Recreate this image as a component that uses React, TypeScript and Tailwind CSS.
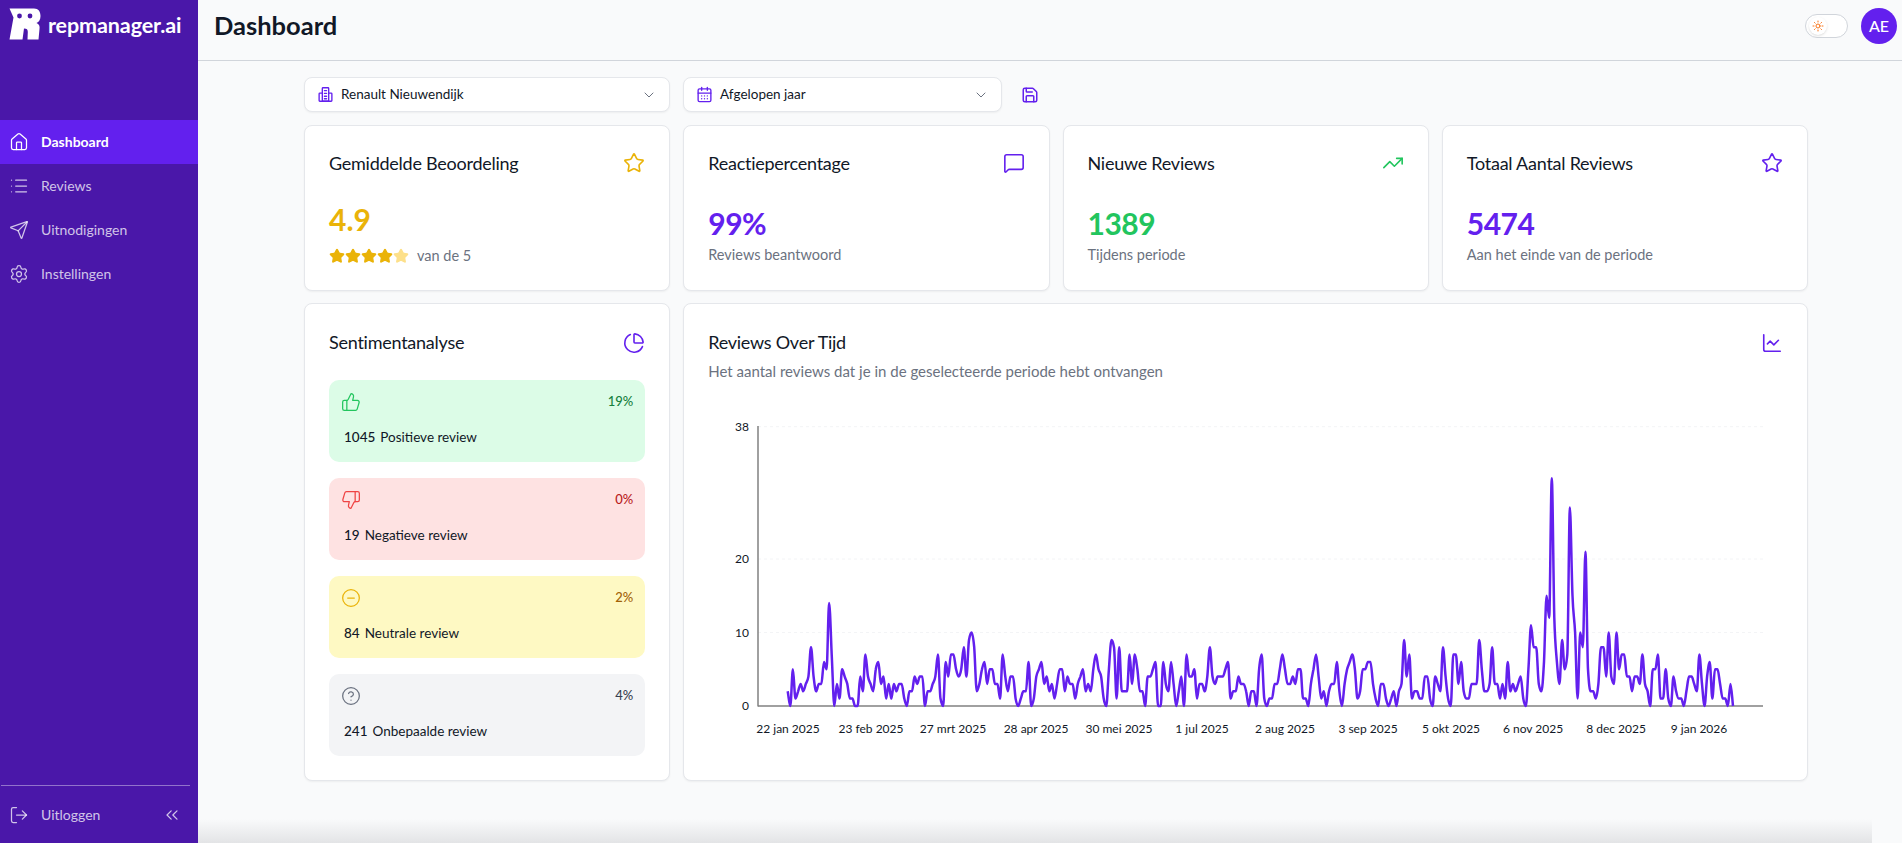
import {
  CalendarDays,
  ChartLine,
  ChartPie,
  ChevronDown,
  ChevronsLeft,
  CircleHelp,
  CircleMinus,
  House,
  List,
  LogOut,
  MessageSquare,
  Save,
  Send,
  Settings,
  Star,
  Sun,
  ThumbsDown,
  ThumbsUp,
  TrendingUp,
} from "lucide-react";

const font = { fontFamily: "Lato, 'Noto Sans', sans-serif" };

// one value per day, 22 jan 2025 to 22 jan 2026
const reviews = [
  2, 0, 5, 1, 2, 3, 2, 3, 4, 8, 4, 2, 3, 3, 6, 5, 14, 7, 0, 3, 1, 5, 4, 3, 1, 1, 0, 0, 4, 2, 7, 4, 3, 2, 5, 6, 3, 4, 1, 3, 1, 3, 2, 3, 3, 1, 0, 2, 2, 4, 3, 4, 4, 0, 2, 2, 3, 4, 7, 1, 0, 6, 4, 7, 7, 5, 4, 5, 8, 4, 9, 10, 8, 2, 3, 5, 6, 3, 5, 5, 3, 3, 1, 7, 4, 2, 4, 4, 1, 0, 1, 2, 2, 6, 0, 1, 4, 5, 6, 3, 4, 2, 3, 1, 3, 5, 5, 2, 4, 3, 3, 1, 3, 4, 5, 2, 3, 2, 5, 7, 5, 4, 1, 0, 5, 9, 8, 1, 8, 2, 2, 2,
  7, 3, 7, 5, 2, 2, 0, 4, 4, 5, 6, 0, 0, 6, 3, 2, 6, 3, 0, 2, 4, 0, 7, 4, 4, 5, 1, 3, 3, 2, 4, 8, 4, 3, 4, 4, 4, 5, 6, 1, 2, 2, 4, 3, 3, 2, 0, 2, 2, 0, 5, 7, 1, 0, 1, 1, 3, 3, 5, 7, 5, 3, 3, 4, 3, 5, 5, 1, 1, 0, 3, 5, 7, 4, 1, 2, 0, 2, 3, 3, 6, 2, 0, 3, 5, 6, 7, 5, 1, 2, 5, 5, 6, 6, 3, 1, 0, 3, 3, 1, 0, 1, 2, 0, 2, 3, 9, 4, 7, 1, 2, 2, 1, 1, 4, 4, 1, 0, 4, 3, 2, 8, 4, 1, 0, 7, 7, 3, 6, 2, 1, 1, 3, 3, 3, 9, 5, 2, 2, 3, 8, 3, 3, 1, 3, 1, 6, 2, 3, 2, 3, 4, 1, 0, 5, 11, 8, 8, 3, 2, 6, 15, 12, 31, 12, 6, 3, 9, 5, 7, 27, 15, 10, 1,
  10, 8, 21, 5, 2, 2, 1, 3, 8, 8, 4, 10, 4, 3, 10, 5, 7, 7, 4, 4, 2, 4, 4, 3, 7, 3, 2, 0, 5, 5, 7, 1, 1, 5, 1, 0, 4, 2, 1, 1, 0, 2, 4, 4, 3, 2, 7, 3, 0, 4, 6, 1, 5, 5, 3, 1, 1, 0, 3, 0,
];

const ticks = [
  { x: 788, label: "22 jan 2025" },
  { x: 871, label: "23 feb 2025" },
  { x: 953, label: "27 mrt 2025" },
  { x: 1036, label: "28 apr 2025" },
  { x: 1119, label: "30 mei 2025" },
  { x: 1202, label: "1 jul 2025" },
  { x: 1285, label: "2 aug 2025" },
  { x: 1368, label: "3 sep 2025" },
  { x: 1451, label: "5 okt 2025" },
  { x: 1533, label: "6 nov 2025" },
  { x: 1616, label: "8 dec 2025" },
  { x: 1699, label: "9 jan 2026" },
];

// chart svg starts at page x 684
const px = (i: number) => 787.7 - 684 + i * 2.59;
const py = (v: number) => 306 - v * 7.35;

// same curve as d3 curveMonotoneX
function monotonePath(values: number[]) {
  const h = 2.59;
  const n = values.length;
  const s: number[] = [];
  for (let i = 0; i < n - 1; i++) s.push((values[i + 1] - values[i]) / h);
  const t: number[] = values.map((_, i) => {
    if (i === 0) return s[0];
    if (i === n - 1) return s[n - 2];
    if (s[i - 1] * s[i] <= 0) return 0;
    const p = (s[i - 1] + s[i]) / 2;
    return Math.min(Math.abs(s[i - 1]), Math.abs(s[i]), Math.abs(p) / 2) * 2 * Math.sign(p);
  });
  let d = `M${px(0).toFixed(1)} ${py(values[0]).toFixed(1)}`;
  for (let i = 0; i < n - 1; i++) {
    const x0 = px(i);
    const x1 = px(i + 1);
    const c1 = py(values[i] + (t[i] * h) / 3);
    const c2 = py(values[i + 1] - (t[i + 1] * h) / 3);
    d += `C${(x0 + h / 3).toFixed(1)} ${c1.toFixed(1)} ${(x1 - h / 3).toFixed(1)} ${c2.toFixed(1)} ${x1.toFixed(1)} ${py(values[i + 1]).toFixed(1)}`;
  }
  return d;
}

const Logo = () => (
  <svg viewBox="0 0 32 32" className="w-8 h-8 shrink-0">
    <path
      d="M0.5 0.5H25C29.5 0.5 31.5 3.5 31.5 8C31.5 11.5 30 14 27.5 15C30 16 31 18 30.5 21L29.5 31.5H18.5L18.8 24C18.8 21.5 18 20.5 15 20.5L13.5 31.5H0.5L4.5 9.5Z"
      fill="white"
    />
    <circle cx="10.5" cy="8" r="2.4" fill="#4a17a9" />
    <circle cx="21" cy="8" r="2.4" fill="#4a17a9" />
  </svg>
);

const BuildingIcon = () => (
  <svg
    viewBox="0 0 24 24"
    fill="none"
    stroke="currentColor"
    strokeWidth="1.9"
    strokeLinejoin="round"
    strokeLinecap="round"
    className="w-[17px] h-[17px] shrink-0 text-[#6320ee]"
  >
    <rect x="7.5" y="2.5" width="9" height="19" rx="1" />
    <path d="M7.5 10H4a1 1 0 0 0-1 1v9.5a1 1 0 0 0 1 1h16a1 1 0 0 0 1-1V11a1 1 0 0 0-1-1h-3.5" />
    <path d="M10.5 6.5h3M10.5 10.5h3M10.5 14.5h3M10.5 18h3" />
  </svg>
);

const StatCard = ({
  title,
  value,
  sub,
  icon,
  color,
}: {
  title: string;
  value: string;
  sub: string;
  icon: React.ReactNode;
  color: string;
}) => (
  <div className="bg-white rounded-lg border border-[#e5e7eb] shadow-xs h-[166px] px-6 pt-[22px]">
    <div className="flex items-center justify-between h-[26px] pt-1">
      <h3 className="text-[18px] text-[#111827] tracking-[-0.25px]">{title}</h3>
      {icon}
    </div>
    <p className={`text-[30px] leading-9 font-bold tracking-[-0.5px] mt-[31px] ${color}`}>{value}</p>
    <p className="text-[14.5px] leading-5 text-[#6b7280] mt-[4px]">{sub}</p>
  </div>
);

const SentimentBox = ({
  bg,
  icon,
  pct,
  pctColor,
  count,
  label,
}: {
  bg: string;
  icon: React.ReactNode;
  pct: string;
  pctColor: string;
  count: string;
  label: string;
}) => (
  <div className={`${bg} rounded-[10px] h-[82px] pl-3 pr-3 pt-3`}>
    <div className="flex items-start justify-between h-[20px]">
      {icon}
      <span className={`text-[13px] leading-[18px] font-medium ${pctColor}`}>{pct}</span>
    </div>
    <p className="text-[13.5px] leading-5 text-[#111827] mt-[15px] pl-[3px]">
      <span className="font-medium">{count}</span>
      <span className="ml-[5px]">{label}</span>
    </p>
  </div>
);

export default function App() {
  return (
    <div className="h-[843px] overflow-hidden flex bg-[#f9fafb]" style={font}>
      {/* SIDEBAR */}
      <aside className="w-[198px] shrink-0 h-full bg-[#4a17a9] flex flex-col text-white">
        <div className="h-[120px] pl-[9px] pt-2 flex items-start gap-[7px]">
          <Logo />
          <span className="text-[21.5px] leading-[34px] font-bold tracking-[-0.1px]">repmanager.ai</span>
        </div>
        <nav className="flex-1">
          <a className="h-11 flex items-center gap-3 pl-[9px] bg-[#6320ee] text-sm font-bold">
            <House className="w-5 h-5" strokeWidth={1.5} />
            Dashboard
          </a>
          <a className="h-11 flex items-center gap-3 pl-[9px] text-white/75 text-sm">
            <List className="w-5 h-5" strokeWidth={1.5} />
            Reviews
          </a>
          <a className="h-11 flex items-center gap-3 pl-[9px] text-white/75 text-sm">
            <Send className="w-5 h-5" strokeWidth={1.5} />
            Uitnodigingen
          </a>
          <a className="h-11 flex items-center gap-3 pl-[9px] text-white/75 text-sm">
            <Settings className="w-5 h-5" strokeWidth={1.5} />
            Instellingen
          </a>
        </nav>
        <div className="ml-px mr-[8px] border-t border-white/40" />
        <div className="h-[57px] flex items-center pl-[9px] pr-[16px] text-white/75 text-sm">
          <LogOut className="w-5 h-5" strokeWidth={1.5} />
          <span className="ml-3">Uitloggen</span>
          <ChevronsLeft className="w-5 h-5 ml-auto" strokeWidth={1.5} />
        </div>
      </aside>

      {/* MAIN */}
      <main className="relative flex-1 min-w-0 flex flex-col">
        <header className="h-[61px] shrink-0 border-b border-[#d1d5db] flex items-center justify-between pl-[16px] pr-[5px] pb-[9px]">
          <h1 className="text-[25.5px] font-bold text-[#111827]">Dashboard</h1>
          <div className="flex items-center gap-[13px]">
            <div className="w-[43px] h-[24px] rounded-full border border-[#d1d5db] bg-white flex items-center pl-[3px]">
              <span className="w-[18px] h-[18px] rounded-full bg-white shadow flex items-center justify-center">
                <Sun className="w-3 h-3 text-[#f97316]" />
              </span>
            </div>
            <div className="w-9 h-9 rounded-full bg-[#6320ee] text-white flex items-center justify-center text-base font-medium">
              AE
            </div>
          </div>
        </header>

        <div className="pl-[106px] pr-[94px] pt-4">
          <div className="flex items-center gap-[13px] h-[35px]">
            <div className="w-[366px] h-full bg-white rounded-lg border border-[#e5e7eb] shadow-xs flex items-center pl-3 pr-3 gap-[7px] text-[13.5px] text-[#111827]">
              <BuildingIcon />
              Renault Nieuwendijk
              <ChevronDown className="w-4 h-4 ml-auto text-[#6b7280]" strokeWidth={1.5} />
            </div>
            <div className="w-[319px] h-full bg-white rounded-lg border border-[#e5e7eb] shadow-xs flex items-center pl-3 pr-3 gap-[7px] text-[13.5px] text-[#111827]">
              <CalendarDays className="w-[17px] h-[17px] text-[#6320ee]" strokeWidth={1.9} />
              Afgelopen jaar
              <ChevronDown className="w-4 h-4 ml-auto text-[#6b7280]" strokeWidth={1.5} />
            </div>
            <Save className="w-[18px] h-[18px] ml-[6px] text-[#6320ee]" strokeWidth={2} />
          </div>

          <div className="grid grid-cols-4 gap-x-[13px] gap-y-3 mt-[13px]">
            <div className="bg-white rounded-lg border border-[#e5e7eb] shadow-xs h-[166px] px-6 pt-[22px]">
              <div className="flex items-center justify-between h-[26px] pt-1">
                <h3 className="text-[18px] text-[#111827] tracking-[-0.25px]">Gemiddelde Beoordeling</h3>
                <Star className="w-[22px] h-[22px] text-[#eab308]" strokeWidth={1.75} />
              </div>
              <p className="text-[30px] leading-9 font-bold mt-[27px] text-[#eab308]">4.9</p>
              <div className="flex items-center mt-[8px] gap-2">
                <div className="flex">
                  {[0, 1, 2, 3, 4].map((i) => (
                    <Star
                      key={i}
                      className={`w-4 h-4 ${i === 4 ? "text-[#fde08a] fill-[#fde08a]" : "text-[#eab308] fill-[#eab308]"}`}
                    />
                  ))}
                </div>
                <span className="text-[14.5px] text-[#6b7280]">van de 5</span>
              </div>
            </div>
            <StatCard
              title="Reactiepercentage"
              value="99%"
              sub="Reviews beantwoord"
              color="text-[#6320ee]"
              icon={<MessageSquare className="w-[22px] h-[22px] text-[#6320ee]" strokeWidth={1.75} />}
            />
            <StatCard
              title="Nieuwe Reviews"
              value="1389"
              sub="Tijdens periode"
              color="text-[#22c55e]"
              icon={<TrendingUp className="w-[22px] h-[22px] text-[#22c55e]" strokeWidth={1.75} />}
            />
            <StatCard
              title="Totaal Aantal Reviews"
              value="5474"
              sub="Aan het einde van de periode"
              color="text-[#6320ee]"
              icon={<Star className="w-[22px] h-[22px] text-[#6320ee]" strokeWidth={1.75} />}
            />

            {/* SENTIMENT */}
            <div className="bg-white rounded-lg border border-[#e5e7eb] shadow-xs h-[478px] px-6 pt-6">
              <div className="flex items-center justify-between h-[26px] pt-[3px]">
                <h3 className="text-[18px] text-[#111827] tracking-[-0.25px]">Sentimentanalyse</h3>
                <ChartPie className="w-[22px] h-[22px] text-[#6320ee]" strokeWidth={1.75} />
              </div>
              <div className="flex flex-col gap-4 mt-[26px]">
                <SentimentBox
                  bg="bg-[#dcfce7]"
                  pct="19%"
                  pctColor="text-[#15803d]"
                  count="1045"
                  label="Positieve review"
                  icon={<ThumbsUp className="w-5 h-5 text-[#22c55e]" strokeWidth={1.5} />}
                />
                <SentimentBox
                  bg="bg-[#fee2e2]"
                  pct="0%"
                  pctColor="text-[#b91c1c]"
                  count="19"
                  label="Negatieve review"
                  icon={<ThumbsDown className="w-5 h-5 text-[#ef4444]" strokeWidth={1.5} />}
                />
                <SentimentBox
                  bg="bg-[#fef9c3]"
                  pct="2%"
                  pctColor="text-[#a16207]"
                  count="84"
                  label="Neutrale review"
                  icon={<CircleMinus className="w-5 h-5 text-[#eab308]" strokeWidth={1.5} />}
                />
                <SentimentBox
                  bg="bg-[#f3f4f6]"
                  pct="4%"
                  pctColor="text-[#374151]"
                  count="241"
                  label="Onbepaalde review"
                  icon={<CircleHelp className="w-5 h-5 text-[#6b7280]" strokeWidth={1.5} />}
                />
              </div>
            </div>

            {/* CHART */}
            <div className="col-span-3 bg-white rounded-lg border border-[#e5e7eb] shadow-xs h-[478px]">
              <div className="px-6 pt-6">
                <div className="flex items-center justify-between h-[26px] pt-[3px]">
                  <h3 className="text-[18px] text-[#111827] tracking-[-0.25px]">Reviews Over Tijd</h3>
                  <ChartLine className="w-[22px] h-[22px] text-[#6320ee]" strokeWidth={1.75} />
                </div>
                <p className="text-[15px] leading-5 text-[#6b7280] mt-[7px]">
                  Het aantal reviews dat je in de geselecteerde periode hebt ontvangen
                </p>
              </div>
              <svg width="1100" height="350" className="block mt-[19px]">
                {[38, 20, 10].map((v) => (
                  <line key={v} x1="74" x2="1079" y1={py(v)} y2={py(v)} stroke="#f3f4f6" strokeDasharray="3 3" />
                ))}
                <line x1="74" x2="74" y1="26" y2="306.5" stroke="#808080" strokeWidth="1.5" />
                <line x1="74" x2="1079" y1="306" y2="306" stroke="#808080" strokeWidth="1.5" />
                {[38, 20, 10, 0].map((v) => (
                  <text key={v} x="65" y={py(v) + 4} textAnchor="end" fontSize="12" fill="#111827" fontFamily="Lato, sans-serif">
                    {v}
                  </text>
                ))}
                {ticks.map((t) => (
                  <text key={t.label} x={t.x - 684} y="333" textAnchor="middle" fontSize="12" fill="#111827" fontFamily="Lato, sans-serif">
                    {t.label}
                  </text>
                ))}
                <path d={monotonePath(reviews)} fill="none" stroke="#6320ee" strokeWidth="2.5" />
              </svg>
            </div>
          </div>
        </div>

        {/* page bottom fade */}
        <div className="absolute left-0 right-[30px] bottom-0 h-[24px] bg-gradient-to-b from-transparent to-[#e3e4e6]" />
      </main>
    </div>
  );
}
